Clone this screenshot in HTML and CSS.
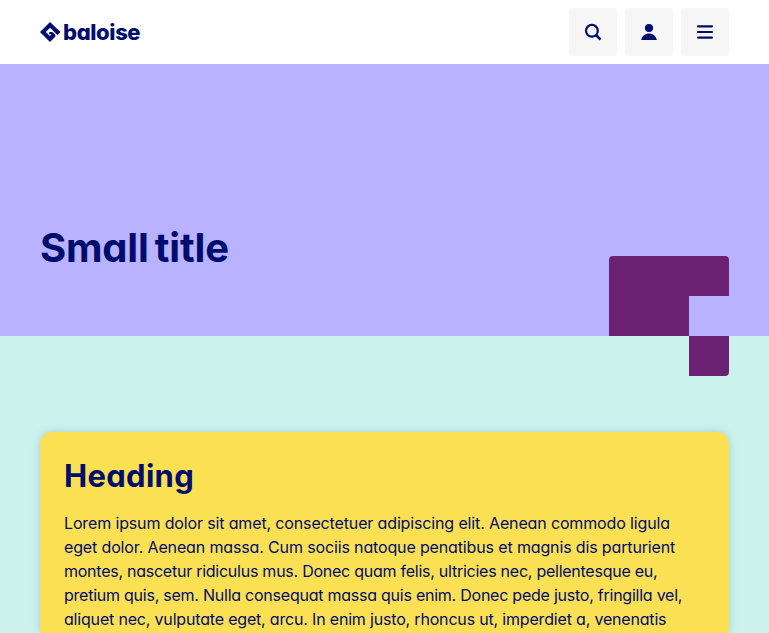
FILE: index.html
```html
<!DOCTYPE html>
<html lang="en">
<head>
<meta charset="utf-8">
<title>Baloise</title>
<link rel="stylesheet" href="styles.css">
</head>
<body>
<header class="nav">
  <a class="logo">
    <svg class="logo-mark" width="21" height="20" viewBox="0 0 21 20"><path d="M10 0 0 10 10 20 15.4 14.6V13L12.4 10H9.2V12.3H11.4L10 13.9 5.8 9.9 10.1 5.7 17.3 12.9 20.4 9.9Z"/></svg>
    <span class="logo-text">baloise</span>
  </a>
  <nav class="actions">
    <button class="action" aria-label="Search"><svg width="18" height="18" viewBox="0 0 18 18"><circle cx="7.9" cy="7.8" r="5.9" fill="none" stroke="currentColor" stroke-width="2.2"/><path d="m12 12 4.6 4.7" stroke="currentColor" stroke-width="2.6"/></svg></button>
    <button class="action" aria-label="Account"><svg width="18" height="18" viewBox="0 0 18 18"><circle cx="9" cy="5" r="4.1" fill="currentColor"/><path d="M1.2 17C2 13 5 10.5 9 10.5S16 13 16.8 17Z" fill="currentColor"/></svg></button>
    <button class="action" aria-label="Menu"><svg width="18" height="18" viewBox="0 0 18 18"><path d="M2 3.4h14M2 9h14M2 14.6h14" stroke="currentColor" stroke-width="2.2" stroke-linecap="round"/></svg></button>
  </nav>
</header>
<section class="stage">
  <h1 class="title">Small title</h1>
  <svg class="shape" width="120" height="120" viewBox="0 0 120 120"><path d="M0 80V4a4 4 0 0 1 4-4H116a4 4 0 0 1 4 4V40H80V80ZM80 80H120V116a4 4 0 0 1-4 4H80Z"/></svg>
</section>
<main class="content">
  <article class="card">
    <h2 class="heading">Heading</h2>
    <p class="text">
      <span class="line line-1">Lorem ipsum dolor sit amet, consectetuer adipiscing elit. Aenean commodo ligula</span>
      <span class="line line-2">eget dolor. Aenean massa. Cum sociis natoque penatibus et magnis dis parturient</span>
      <span class="line line-3">montes, nascetur ridiculus mus. Donec quam felis, ultricies nec, pellentesque eu,</span>
      <span class="line line-4">pretium quis, sem. Nulla consequat massa quis enim. Donec pede justo, fringilla vel,</span>
      <span class="line line-5">aliquet nec, vulputate eget, arcu. In enim justo, rhoncus ut, imperdiet a, venenatis</span>
    </p>
  </article>
</main>
</body>
</html>
```
FILE: styles.css
```css
* { box-sizing: border-box; }
body {
  margin: 0;
  height: 100vh;
  overflow: hidden;
  display: flex;
  flex-direction: column;
  background: #cbf2ec;
  color: #000d6e;
  font-family: Inter, "Open Sans", sans-serif;
  font-feature-settings: "cv11" 1;
}
.nav {
  flex: none;
  height: 64px;
  padding: 0 40px;
  display: flex;
  align-items: center;
  justify-content: space-between;
  background: #fff;
}
.logo { display: flex; align-items: center; gap: 2px; }
.logo-mark { fill: #000d6e; }
.logo-text { font-size: 22px; line-height: 24px; font-weight: 800; letter-spacing: -0.4px; }
.actions { display: flex; gap: 8px; }
.action {
  width: 48px;
  height: 48px;
  padding: 0;
  border: 0;
  border-radius: 4px;
  display: flex;
  align-items: center;
  justify-content: center;
  background: #f6f6f6;
  color: #000d6e;
}
.stage {
  flex: none;
  position: relative;
  height: 272px;
  padding: 0 40px 64px;
  display: flex;
  align-items: flex-end;
  background: #b8b2ff;
}
.title { margin: 0; font-size: 40px; line-height: 48px; font-weight: 700; letter-spacing: -0.2px; word-spacing: -3px; white-space: nowrap; }
.shape { position: absolute; right: 40px; bottom: -40px; fill: #6c2273; }
.content { flex: 1; min-height: 0; padding: 96px 40px 0; display: flex; flex-direction: column; }
.card {
  flex: 1;
  padding: 24px 24px 0;
  border-radius: 12px 12px 0 0;
  background: #fae052;
  box-shadow: 0 0 10px rgba(0, 13, 110, 0.15);
}
.heading { margin: 0 0 15px; font-size: 31px; line-height: 40px; font-weight: 700; letter-spacing: 0.3px; }
.text { margin: 0; font-size: 16px; line-height: 24px; }
.line { display: block; white-space: nowrap; }
.line-1 { letter-spacing: -0.14px; }
.line-2 { letter-spacing: -0.14px; }
.line-3 { letter-spacing: -0.25px; }
.line-4 { letter-spacing: -0.24px; }
.line-5 { letter-spacing: -0.18px; }
```
